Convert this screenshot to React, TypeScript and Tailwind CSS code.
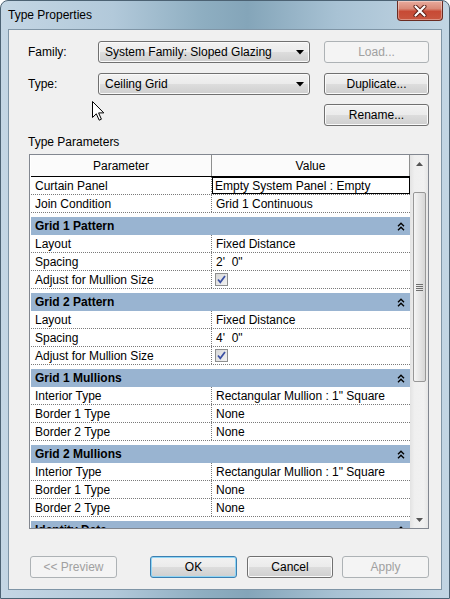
import React from 'react';

type Row =
  | { kind: 'row'; p: string; v?: string; check?: boolean; selected?: boolean }
  | { kind: 'group'; p: string };

const rows: Row[] = [
  { kind: 'row', p: 'Curtain Panel', v: 'Empty System Panel : Empty', selected: true },
  { kind: 'row', p: 'Join Condition', v: 'Grid 1 Continuous' },
  { kind: 'group', p: 'Grid 1 Pattern' },
  { kind: 'row', p: 'Layout', v: 'Fixed Distance' },
  { kind: 'row', p: 'Spacing', v: `2'  0"` },
  { kind: 'row', p: 'Adjust for Mullion Size', check: true },
  { kind: 'group', p: 'Grid 2 Pattern' },
  { kind: 'row', p: 'Layout', v: 'Fixed Distance' },
  { kind: 'row', p: 'Spacing', v: `4'  0"` },
  { kind: 'row', p: 'Adjust for Mullion Size', check: true },
  { kind: 'group', p: 'Grid 1 Mullions' },
  { kind: 'row', p: 'Interior Type', v: 'Rectangular Mullion : 1" Square' },
  { kind: 'row', p: 'Border 1 Type', v: 'None' },
  { kind: 'row', p: 'Border 2 Type', v: 'None' },
  { kind: 'group', p: 'Grid 2 Mullions' },
  { kind: 'row', p: 'Interior Type', v: 'Rectangular Mullion : 1" Square' },
  { kind: 'row', p: 'Border 1 Type', v: 'None' },
  { kind: 'row', p: 'Border 2 Type', v: 'None' },
  { kind: 'group', p: 'Identity Data' },
];

function DoubleUp() {
  return (
    <svg width="8" height="9" viewBox="0 0 8 9">
      <path d="M1 4.2 L4 1.2 L7 4.2" fill="none" stroke="#000" strokeWidth="1.4" />
      <path d="M1 8.2 L4 5.2 L7 8.2" fill="none" stroke="#000" strokeWidth="1.4" />
    </svg>
  );
}

function Check() {
  return (
    <div className="w-[13px] h-[13px] border border-[#8e8f8f] bg-[linear-gradient(135deg,#d8d8d8_0%,#f2f2f2_100%)] flex items-center justify-center">
      <svg width="11" height="11" viewBox="0 0 11 11">
        <path d="M2 5.5 L4.3 8.3 L9 2" fill="none" stroke="#3a4fa3" strokeWidth="1.7" />
      </svg>
    </div>
  );
}

function Combo({ text }: { text: string }) {
  return (
    <div className="w-[212px] h-[22px] flex items-center justify-between pl-[6px] pr-[5px] rounded-[3px] border border-[#707070] bg-[linear-gradient(180deg,#f2f2f2_0%,#ebebeb_50%,#dddddd_50%,#cfcfcf_100%)] shadow-[inset_0_0_0_1px_#fafafa]">
      <span>{text}</span>
      <svg width="8" height="5" viewBox="0 0 8 5">
        <path d="M0 0 L8 0 L4 4.5 Z" fill="#000" />
      </svg>
    </div>
  );
}

function Btn({ text, w, variant }: { text: string; w: string; variant: 'normal' | 'disabled' | 'default' }) {
  if (variant === 'disabled') {
    return (
      <div className={`${w} h-[22px] flex items-center justify-center rounded-[3px] border border-[#adb2b5] bg-[#f4f4f4] text-[#a0a0a0]`}>
        {text}
      </div>
    );
  }
  if (variant === 'default') {
    return (
      <div className={`${w} h-[22px] flex items-center justify-center rounded-[3px] border border-[#3c7fb1] bg-[linear-gradient(180deg,#f2f2f2_0%,#ebebeb_50%,#dddddd_50%,#cfcfcf_100%)] shadow-[inset_0_0_0_1px_#8fd5f5]`}>
        {text}
      </div>
    );
  }
  return (
    <div className={`${w} h-[22px] flex items-center justify-center rounded-[3px] border border-[#707070] bg-[linear-gradient(180deg,#f2f2f2_0%,#ebebeb_50%,#dddddd_50%,#cfcfcf_100%)] shadow-[inset_0_0_0_1px_#fafafa]`}>
      {text}
    </div>
  );
}

function Grip() {
  return (
    <div className="flex flex-col gap-[1px]">
      <div className="w-[7px] h-[1px] bg-[#6e6e6e]" />
      <div className="w-[7px] h-[1px] bg-[#6e6e6e]" />
      <div className="w-[7px] h-[1px] bg-[#6e6e6e]" />
      <div className="w-[7px] h-[1px] bg-[#6e6e6e]" />
    </div>
  );
}

export default function App() {
  return (
    <div className="w-[450px] h-[599px] flex flex-col rounded-t-[8px] border border-[#4c6273] bg-[linear-gradient(90deg,#c4d6e4_0%,#b2c9da_25%,#8eaec1_45%,#84a5b9_55%,#a8c2d4_75%,#c2d5e3_100%)] font-['Liberation_Sans',Arial,sans-serif] text-[12px] text-black overflow-hidden">
      {/* Title bar */}
      <div className="h-[28px] flex justify-between items-start">
        <div className="h-[28px] flex items-center pl-[7px] text-[12px]">Type Properties</div>
        <div className="mr-[6px] w-[46px] h-[20px] rounded-b-[4px] border border-t-0 border-[#6a2b22] bg-[linear-gradient(180deg,#e8ab9d_0%,#d98a78_40%,#c74a35_55%,#c95740_100%)] shadow-[inset_0_0_0_1px_rgba(255,255,255,0.35)] flex items-center justify-center">
          <svg width="14" height="12" viewBox="0 0 14 12">
            <path d="M2.5 1.5 L11.5 10.5 M11.5 1.5 L2.5 10.5" stroke="#5b1e15" strokeWidth="4" strokeLinecap="round" />
            <path d="M2.5 1.5 L11.5 10.5 M11.5 1.5 L2.5 10.5" stroke="#ffffff" strokeWidth="2.2" strokeLinecap="round" />
          </svg>
        </div>
      </div>

      {/* Client area */}
      <div className="relative ml-[7px] w-[434px] h-[561px] border border-[#7f95a6] bg-[#f0f0f0] flex flex-col">
        <div className="pt-[11px] pl-[19px] flex items-center h-[33px]">
          <div className="w-[70px]">Family:</div>
          <Combo text="System Family: Sloped Glazing" />
          <div className="ml-[14px]">
            <Btn text="Load..." w="w-[105px]" variant="disabled" />
          </div>
        </div>
        <div className="mt-[10px] pl-[19px] flex items-center h-[22px]">
          <div className="w-[70px]">Type:</div>
          <Combo text="Ceiling Grid" />
          <div className="ml-[14px]">
            <Btn text="Duplicate..." w="w-[105px]" variant="normal" />
          </div>
        </div>
        <div className="mt-[9px] pl-[315px] flex h-[22px]">
          <Btn text="Rename..." w="w-[105px]" variant="normal" />
        </div>
        <div className="mt-[8px] h-[16px] leading-[16px] pl-[19px]">Type Parameters</div>

        {/* Table */}
        <div className="mt-[4px] ml-[20px] w-[400px] h-[375px] border border-[#828790] flex">
          <div className="w-[380px] h-full bg-white pl-[1px] flex flex-col overflow-hidden">
            <div className="h-[22px] shrink-0 flex border-b border-black bg-[#fbfbfb]">
              <div className="w-[181px] border-r border-[#8e8f8f] flex items-center justify-center">Parameter</div>
              <div className="flex-1 border-r border-[#8e8f8f] flex items-center justify-center">Value</div>
            </div>
            {rows.map((r, i) =>
              r.kind === 'group' ? (
                <div key={i} className="shrink-0 mt-[4px] h-[18px] bg-[#99b4d1] flex items-center justify-between pl-[4px] pr-[5px] font-bold">
                  <span>{r.p}</span>
                  <DoubleUp />
                </div>
              ) : (
                <div key={i} className="shrink-0 h-[18px] flex border-b border-dotted border-[#7a7a7a]">
                  <div className="w-[181px] pl-[4px] border-r border-dotted border-[#7a7a7a] flex items-center whitespace-pre">{r.p}</div>
                  {r.selected ? (
                    <div className="flex-1 pl-[3px] flex items-center whitespace-pre shadow-[inset_0_0_0_1px_#000]">{r.v}</div>
                  ) : r.check ? (
                    <div className="flex-1 pl-[3px] flex items-center">
                      <Check />
                    </div>
                  ) : (
                    <div className="flex-1 pl-[4px] flex items-center whitespace-pre">{r.v}</div>
                  )}
                </div>
              )
            )}
          </div>
          {/* Scrollbar */}
          <div className="w-[18px] h-full flex flex-col bg-[linear-gradient(90deg,#e3e3e3_0%,#efefef_25%,#f1f1f1_75%,#e6e6e6_100%)]">
            <div className="h-[17px] shrink-0 flex items-center justify-center">
              <svg width="7" height="4" viewBox="0 0 7 4">
                <path d="M0 4 L7 4 L3.5 0 Z" fill="#555" />
              </svg>
            </div>
            <div className="h-[20px] shrink-0" />
            <div className="h-[190px] shrink-0 ml-[3px] mr-[2px] rounded-[2px] border border-[#979797] bg-[linear-gradient(90deg,#f5f5f5_0%,#e6e6e6_50%,#d6d6d6_100%)] flex items-center justify-center">
              <Grip />
            </div>
            <div className="flex-1" />
            <div className="h-[17px] shrink-0 flex items-center justify-center">
              <svg width="7" height="4" viewBox="0 0 7 4">
                <path d="M0 0 L7 0 L3.5 4 Z" fill="#555" />
              </svg>
            </div>
          </div>
        </div>

        {/* Bottom buttons */}
        <div className="mt-[27px] pl-[21px] flex">
          <Btn text="<< Preview" w="w-[87px]" variant="disabled" />
          <div className="ml-[33px]">
            <Btn text="OK" w="w-[87px]" variant="default" />
          </div>
          <div className="ml-[10px]">
            <Btn text="Cancel" w="w-[86px]" variant="normal" />
          </div>
          <div className="ml-[9px]">
            <Btn text="Apply" w="w-[87px]" variant="disabled" />
          </div>
        </div>

        {/* Mouse cursor */}
        <div className="absolute left-[83px] top-[71px]">
          <svg width="13" height="20" viewBox="0 0 13 20">
            <path d="M0.5 0.5 L0.5 16.5 L4.3 12.8 L7.2 19.2 L9.4 18.2 L6.6 11.9 L11.8 11.9 Z" fill="#fff" stroke="#000" strokeWidth="1" strokeLinejoin="round" />
          </svg>
        </div>
      </div>
    </div>
  );
}
